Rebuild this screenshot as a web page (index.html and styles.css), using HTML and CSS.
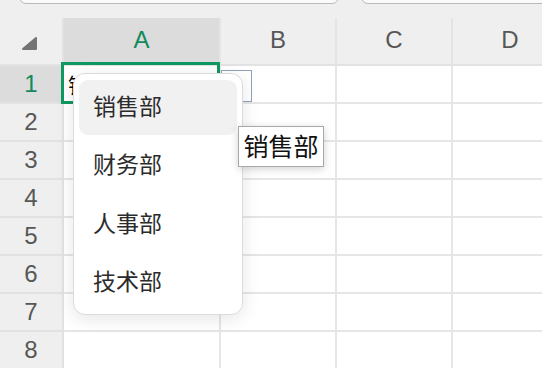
FILE: index.html
```html
<!DOCTYPE html>
<html lang="zh">
<head>
<meta charset="utf-8">
<link rel="stylesheet" href="styles.css">
</head>
<body>
<div class="wrap">
  <div class="topbar">
    <div class="inp inp1"></div>
    <div class="inp inp2"></div>
  </div>
  <div class="sheet">
    <div class="corner hdr"><svg width="20" height="20" viewBox="0 0 20 20"><polygon points="16,3 16,14 3,14" fill="#737373" stroke="#737373" stroke-width="2" stroke-linejoin="round"/></svg></div>
    <div class="colh hdr active">A</div>
    <div class="colh hdr">B</div>
    <div class="colh hdr">C</div>
    <div class="colh hdr">D</div>

    <div class="rowh active">1</div>
    <div class="cell sel"><span class="val">销售部</span></div>
    <div class="cell"></div><div class="cell"></div><div class="cell"></div>

    <div class="rowh">2</div><div class="cell"></div><div class="cell"></div><div class="cell"></div><div class="cell"></div>
    <div class="rowh">3</div><div class="cell"></div><div class="cell"></div><div class="cell"></div><div class="cell"></div>
    <div class="rowh">4</div><div class="cell"></div><div class="cell"></div><div class="cell"></div><div class="cell"></div>
    <div class="rowh">5</div><div class="cell"></div><div class="cell"></div><div class="cell"></div><div class="cell"></div>
    <div class="rowh">6</div><div class="cell"></div><div class="cell"></div><div class="cell"></div><div class="cell"></div>
    <div class="rowh">7</div><div class="cell"></div><div class="cell"></div><div class="cell"></div><div class="cell"></div>
    <div class="rowh">8</div><div class="cell"></div><div class="cell"></div><div class="cell"></div><div class="cell"></div>
  </div>

  <div class="listbtn"></div>

  <div class="menu">
    <div class="item hover">销售部</div>
    <div class="item">财务部</div>
    <div class="item">人事部</div>
    <div class="item">技术部</div>
  </div>

  <div class="tip">销售部</div>
</div>
</body>
</html>
```

FILE: styles.css
```css
* { box-sizing: border-box; }
html, body {
  margin: 0;
  padding: 0;
  width: 542px;
  height: 368px;
  overflow: hidden;
  background: #efefef;
  font-family: "Liberation Sans", "Noto Sans CJK SC", sans-serif;
}
.wrap {
  position: relative;
  width: 542px;
  height: 368px;
  overflow: hidden;
}
.topbar {
  height: 18px;
  display: flex;
  gap: 22px;
  padding-left: 19px;
  align-items: flex-start;
}
.inp {
  height: 14px;
  margin-top: -10px;
  background: #fafafa;
  border: 1.5px solid #b9b9b9;
  border-radius: 12px;
}
.inp1 { width: 320px; }
.inp2 { flex: 1; margin-right: -20px; }

.sheet {
  display: grid;
  grid-template-columns: 64px 157px 116px 116px 116px;
  grid-template-rows: 48px repeat(8, 38px);
  width: 569px;
  background: #fff;
}
.hdr {
  background: #efefef;
  border-bottom: 2px solid #e2e2e2;
}
.corner {
  display: flex;
  align-items: flex-end;
  justify-content: flex-end;
  padding: 0 22px 9px 0;
  border-right: 2px solid #e2e2e2;
}
.colh {
  display: flex;
  align-items: center;
  justify-content: center;
  font-size: 24px;
  color: #575757;
  border-right: 2px solid #e4e4e4;
  padding-bottom: 2px;
}
.colh.active {
  background: #dcdcdc;
  color: #128a5a;
}
.rowh {
  display: flex;
  align-items: center;
  justify-content: center;
  font-size: 24px;
  color: #575757;
  background: #efefef;
  border-right: 2px solid #e2e2e2;
  border-bottom: 2px solid #e2e2e2;
}
.rowh.active {
  background: #dcdcdc;
  color: #128a5a;
}
.cell {
  border-right: 2px solid #e6e6e6;
  border-bottom: 2px solid #e6e6e6;
  background: #fff;
}
.cell.sel {
  position: relative;
  display: flex;
  align-items: center;
  padding-left: 4px;
}
.cell.sel::after {
  content: "";
  position: absolute;
  left: -3px;
  top: -4px;
  right: -1px;
  bottom: -2px;
  border: 3px solid #0f9862;
}
.val {
  font-size: 21px;
  color: #000;
  font-family: "Noto Sans CJK SC", sans-serif;
}
.listbtn {
  position: absolute;
  left: 221px;
  top: 70px;
  width: 31px;
  height: 32px;
  border: 1.5px solid #8ea2b9;
  background: #fff;
}
.menu {
  position: absolute;
  left: 73px;
  top: 73px;
  width: 170px;
  height: 242px;
  background: #fff;
  border: 1px solid #dcdcdc;
  border-radius: 12px;
  box-shadow: 0 4px 18px rgba(0, 0, 0, 0.10);
  padding: 6px 5px 0;
  display: flex;
  flex-direction: column;
  gap: 3.6px;
}
.item {
  height: 55px;
  flex: none;
  display: flex;
  align-items: center;
  padding: 0 0 6px 14px;
  font-family: "Noto Sans CJK SC", sans-serif;
  font-size: 23px;
  color: #2b2b2b;
  border-radius: 9px;
}
.item.hover {
  background: #f1f1f1;
}
.tip {
  position: absolute;
  left: 238px;
  top: 126px;
  width: 86px;
  height: 41px;
  background: #fff;
  border: 1px solid #a8a8a8;
  box-shadow: 0 2px 8px rgba(0, 0, 0, 0.18);
  font-family: "Noto Sans CJK SC", sans-serif;
  font-size: 25px;
  color: #111;
  display: flex;
  align-items: center;
  justify-content: center;
  padding-bottom: 3px;
}
```
